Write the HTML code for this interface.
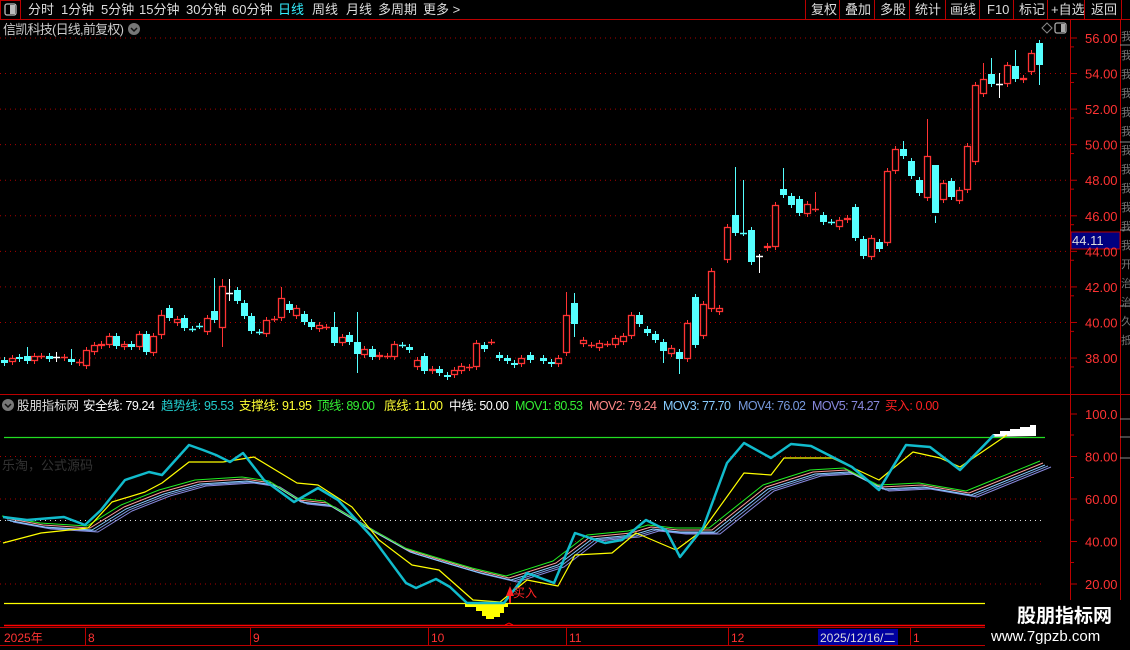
<!DOCTYPE html>
<html><head><meta charset="utf-8">
<style>
html,body{margin:0;padding:0;background:#000;width:1130px;height:650px;overflow:hidden;font-family:"Liberation Sans","Noto Sans CJK SC",sans-serif}
svg{position:absolute;left:0;top:0}
</style></head><body>
<svg id="s" width="1130" height="650" xmlns="http://www.w3.org/2000/svg" font-family="Liberation Sans, Noto Sans CJK SC, sans-serif">
<rect width="1130" height="650" fill="#000"/>
<line x1="0" y1="19.5" x2="1130" y2="19.5" stroke="#b00" />
<rect x="0.5" y="0.5" width="20" height="19" fill="none" stroke="#b00"/>
<rect x="5" y="4" width="11" height="11" rx="2" fill="none" stroke="#bbb" stroke-width="1.3"/>
<rect x="10" y="5" width="5" height="9" fill="#bbb"/>
<g font-size="13" fill="#ddd">
<text x="28" y="14">分时</text><text x="61" y="14">1分钟</text><text x="101" y="14">5分钟</text><text x="139" y="14">15分钟</text><text x="186" y="14">30分钟</text><text x="232" y="14">60分钟</text>
<text x="278" y="14" fill="#3ef">日线</text><text x="312" y="14">周线</text><text x="346" y="14">月线</text><text x="378" y="14">多周期</text><text x="423" y="14">更多 &gt;</text>
</g>
<g stroke="#b00">
<line x1="805.5" y1="0" x2="805.5" y2="19"/><line x1="839.5" y1="0" x2="839.5" y2="19"/><line x1="874.5" y1="0" x2="874.5" y2="19"/><line x1="909.5" y1="0" x2="909.5" y2="19"/><line x1="945.5" y1="0" x2="945.5" y2="19"/><line x1="979.5" y1="0" x2="979.5" y2="19"/><line x1="1013.5" y1="0" x2="1013.5" y2="19"/><line x1="1047.5" y1="0" x2="1047.5" y2="19"/><line x1="1084.5" y1="0" x2="1084.5" y2="19"/><line x1="1121.5" y1="0" x2="1121.5" y2="19"/>
</g>
<g font-size="13" fill="#ddd">
<text x="811" y="14">复权</text><text x="845" y="14">叠加</text><text x="880" y="14">多股</text><text x="915" y="14">统计</text><text x="950" y="14">画线</text><text x="987" y="14">F10</text><text x="1019" y="14">标记</text><text x="1051" y="14">+自选</text><text x="1091" y="14">返回</text>
</g>
<text x="3" y="34" font-size="13" fill="#ccc" textLength="121">信凯科技(日线,前复权)</text>
<circle cx="134" cy="29" r="6" fill="#777"/><path d="M131 28l3 3 3-3" stroke="#111" stroke-width="1.5" fill="none"/>
<path d="M1042 28l5-5 5 5-5 5z" fill="none" stroke="#888"/>
<rect x="1055" y="23" width="11" height="10" rx="2" fill="none" stroke="#aaa" stroke-width="1.3"/><rect x="1061" y="24" width="4" height="8" fill="#aaa"/>
<line x1="1070.5" y1="20" x2="1070.5" y2="627" stroke="#b00"/>
<line x1="1120.5" y1="20" x2="1120.5" y2="627" stroke="#b00"/>
<line x1="0" y1="394.5" x2="1130" y2="394.5" stroke="#b00"/>
<line x1="0" y1="627.5" x2="985" y2="627.5" stroke="#b00"/>
<line x1="0" y1="645.5" x2="985" y2="645.5" stroke="#b00"/>
<g id="grid"></g>
<g id="candles"></g>
<rect x="1071" y="232" width="49" height="17" fill="#000080" stroke="#b00"/>
<text x="1072" y="245" font-size="13" fill="#ddd">44.11</text>
<circle cx="8" cy="405" r="6" fill="#777"/><path d="M5 404l3 3 3-3" stroke="#111" stroke-width="1.5" fill="none"/>
<g font-size="12.5">
<text x="17" y="410" fill="#ddd" textLength="62">股朋指标网</text>
<text x="83" y="410" fill="#fff" textLength="72">安全线: 79.24</text>
<text x="161" y="410" fill="#2cc" textLength="73">趋势线: 95.53</text>
<text x="239" y="410" fill="#ff3" textLength="73">支撑线: 91.95</text>
<text x="317" y="410" fill="#3e3" textLength="58">顶线: 89.00</text>
<text x="384" y="410" fill="#ff3" textLength="59">底线: 11.00</text>
<text x="449" y="410" fill="#fff" textLength="60">中线: 50.00</text>
<text x="515" y="410" fill="#3e3" textLength="68">MOV1: 80.53</text>
<text x="589" y="410" fill="#f88" textLength="68">MOV2: 79.24</text>
<text x="663" y="410" fill="#8cf" textLength="68">MOV3: 77.70</text>
<text x="738" y="410" fill="#79d" textLength="68">MOV4: 76.02</text>
<text x="812" y="410" fill="#88d" textLength="68">MOV5: 74.27</text>
<text x="885" y="410" fill="#f22" textLength="54">买入: 0.00</text>
</g>
<text x="2" y="470" font-size="13" fill="#333">乐淘，公式源码</text>
<line x1="4" y1="437.5" x2="1045" y2="437.5" stroke="#2d2" stroke-width="1.3"/>
<line x1="4" y1="603.5" x2="985" y2="603.5" stroke="#ff0" stroke-width="1.3"/>
<line x1="4" y1="625.5" x2="985" y2="625.5" stroke="#f00" stroke-width="1.5"/>
<path d="M505 625l4-2 4 2" stroke="#f00" fill="none"/>
<path d="M465 603h43v4h-4v6h-4v4h-6v2h-8v-3h-4v-5h-6v-4h-11z" fill="#ff0"/>
<path d="M985 437h5l3-3h7v-3h10v-2h10v-2h10v-2h6v11z" fill="#fff"/>
<g id="ind"></g>
<path d="M510 586l-4 10h3v7h2v-7h3z" fill="#f22"/>
<text x="513" y="597" font-size="12" fill="#f22">买入</text>
<g id="axl" font-size="13" fill="#f33"></g>
<g font-size="12" fill="#f33">
<text x="4" y="642">2025年</text><text x="88" y="642">8</text><text x="253" y="642">9</text><text x="431" y="642">10</text><text x="569" y="642">11</text><text x="731" y="642">12</text><text x="913" y="642">1</text>
</g>
<g stroke="#b00"><line x1="85.5" y1="628" x2="85.5" y2="645"/><line x1="250.5" y1="628" x2="250.5" y2="645"/><line x1="428.5" y1="628" x2="428.5" y2="645"/><line x1="566.5" y1="628" x2="566.5" y2="645"/><line x1="728.5" y1="628" x2="728.5" y2="645"/><line x1="910.5" y1="628" x2="910.5" y2="645"/></g>
<rect x="818" y="629" width="80" height="16" fill="#0000a0"/>
<text x="820" y="642" font-size="12" fill="#ddd">2025/12/16/二</text>
<rect x="985" y="600" width="145" height="50" fill="#000"/>
<text x="1017" y="622" font-size="19" font-weight="bold" fill="#fff">股朋指标网</text>
<text x="991" y="641" font-size="15" fill="#fff">www.7gpzb.com</text>
<g stroke="#888" stroke-width="1"><line x1="1120" y1="45" x2="1130" y2="45"/><line x1="1120" y1="142" x2="1130" y2="142"/><line x1="1120" y1="230" x2="1130" y2="230"/><line x1="1120" y1="306" x2="1130" y2="306"/><line x1="1120" y1="419" x2="1130" y2="419"/><line x1="1120" y1="437" x2="1130" y2="437"/><line x1="1120" y1="458" x2="1130" y2="458"/></g>
<g id="side" font-size="11" fill="#777"></g>
</svg>
<script>
var NS="http://www.w3.org/2000/svg";
function el(p,t,a,txt){var e=document.createElementNS(NS,t);for(var k in a)e.setAttribute(k,a[k]);if(txt!=null)e.textContent=txt;document.getElementById(p).appendChild(e);return e;}
for(var p=38;p<=56;p+=2){var y=38+(56-p)*17.78;
 el("grid","line",{x1:0,x2:1068,y1:y,y2:y,stroke:"#a00","stroke-dasharray":"1 4"});
 el("grid","line",{x1:1070,x2:1077,y1:y,y2:y,stroke:"#b00"});
 el("grid","line",{x1:1070,x2:1074,y1:y+8.9,y2:y+8.9,stroke:"#b00"});
 el("axl","text",{x:1085,y:y+5},p.toFixed(2));}
[[100,"100.0"],[80,"80.00"],[60,"60.00"],[40,"40.00"],[20,"20.00"]].forEach(function(v){var y=626.5-2.125*v[0];
 if(v[0]<100)el("grid","line",{x1:0,x2:1045,y1:y,y2:y,stroke:"#a00","stroke-dasharray":"1 4"});
 el("grid","line",{x1:1070,x2:1077,y1:y,y2:y,stroke:"#b00"});
 el("grid","line",{x1:1070,x2:1074,y1:y+21,y2:y+21,stroke:"#b00"});
 el("axl","text",{x:1085,y:y+5},v[1]);});
el("grid","line",{x1:0,x2:1045,y1:520.5,y2:520.5,stroke:"#ddd","stroke-dasharray":"1 4"});
var C=[[4,360,363,'c'],[12,358,362,'r'],[19,357,359,'c'],[27,356,361,'c',347],[34,356,361,'r'],[41,356,356,'r'],[49,356,359,'c'],[56,357,357,'w',352,362],[64,357,358,'r'],[71,359,362,'c',349],[79,362,363,'r'],[86,366,350,'r'],[94,352,345,'r'],[101,346,344,'r'],[109,345,336,'r'],[116,336,346,'c'],[124,347,344,'r'],[131,344,347,'c'],[139,347,334,'r'],[146,334,352,'c'],[153,353,336,'r'],[161,335,315,'r',310,339],[169,308,318,'c'],[177,323,319,'r'],[184,318,328,'c'],[192,329,329,'c'],[199,326,326,'c'],[207,332,318,'r'],[214,311,320,'c',278],[222,328,286,'r',279,347],[229,293,293,'w',279,301],[237,290,301,'c'],[244,303,316,'c'],[251,316,331,'c'],[259,332,332,'c'],[266,334,320,'r'],[274,319,319,'r'],[281,318,298,'r',287],[289,304,310,'c'],[296,316,308,'r'],[304,314,322,'c'],[311,322,327,'c'],[319,329,325,'r'],[326,327,327,'r'],[334,327,343,'c',312],[342,343,337,'r'],[349,335,342,'c'],[357,342,354,'c',312,373],[364,355,349,'r'],[372,349,357,'c'],[379,357,355,'r'],[387,356,356,'r'],[394,357,344,'r'],[402,345,345,'c'],[409,347,350,'c'],[417,367,360,'r'],[424,356,371,'c'],[432,371,369,'r'],[439,369,373,'c'],[447,375,377,'c'],[454,375,370,'r'],[461,371,366,'r'],[469,368,367,'r'],[476,367,343,'r'],[484,345,349,'c'],[491,342,342,'r'],[499,355,358,'c'],[507,358,361,'c'],[514,363,365,'c'],[521,364,358,'r'],[530,355,360,'c'],
[543,358,361,'c'],[551,362,364,'c'],[558,364,358,'r'],[566,353,315,'r',292],[574,303,324,'c',293,337],[583,344,340,'r'],[591,345,345,'r'],[599,348,343,'r'],[607,344,344,'r'],[615,345,338,'r'],[623,342,336,'r'],[631,336,315,'r'],[639,315,324,'c'],[647,329,333,'c'],[655,334,340,'c'],[663,342,351,'c',null,363],[671,354,348,'r'],[679,352,359,'c',null,374],[687,359,323,'r'],[695,297,345,'c'],[703,336,304,'r'],[711,309,271,'r'],[719,312,308,'r'],[727,260,227,'r'],[735,215,233,'c',167],[743,233,233,'c',180],[751,230,262,'c'],[759,256,256,'w',254,273],[767,248,246,'r'],[775,247,205,'r'],[783,189,195,'c',168],[791,196,205,'c'],[799,199,213,'c'],[807,214,204,'r'],[815,209,209,'r',192],[823,215,222,'c'],[831,222,222,'c'],[839,227,220,'r'],[847,220,218,'r'],[855,207,238,'c'],[863,239,256,'c'],[871,257,238,'r'],[879,242,249,'c'],[887,243,171,'r'],[895,171,149,'r'],[903,149,156,'c',141],[911,161,176,'c'],[919,180,193,'c'],[927,198,156,'r',119],[935,165,213,'c',223],[943,200,183,'r'],[951,181,197,'c'],[959,201,190,'r'],[967,190,146,'r'],[975,162,85,'r'],[983,94,79,'r',63],[991,74,84,'c',58],[999,84,84,'w',73,98],[1007,84,65,'r'],[1015,66,79,'c',50],[1023,80,78,'r'],[1031,72,53,'r'],[1039,43,65,'c',40,85]];
C.forEach(function(c){var x=c[0],a=c[1],b=c[2],t=c[3];var top=Math.min(a,b),bot=Math.max(a,b);
 var hi=c[4]!=null?c[4]:top-3,lo=c[5]!=null?c[5]:bot+3;
 var col=t=='r'?'#f33':(t=='c'?'#5ff':'#fff');
 el("candles","line",{x1:x+0.5,x2:x+0.5,y1:hi,y2:lo,stroke:col});
 if(bot-top<2){el("candles","line",{x1:x-3,x2:x+4,y1:top+0.5,y2:top+0.5,stroke:col,"stroke-width":1.5});}
 else if(t=='r'){el("candles","rect",{x:x-2.5,y:top+0.5,width:6,height:bot-top-1,fill:"#000",stroke:col,"stroke-width":1.3});}
 else el("candles","rect",{x:x-3,y:top,width:7,height:bot-top,fill:col});});
function pl(pts,col,w,dx,dy){el("ind","polyline",{points:pts.map(function(p){return (p[0]+dx)+","+(p[1]+dy)}).join(" "),fill:"none",stroke:col,"stroke-width":w,"stroke-linejoin":"round"});}
var M=[[3,518],[41,525],[88,528],[122,507],[160,492],[196,482],[243,479],[270,483],[297,500],[325,503],[365,527],[406,550],[439,560],[473,570],[507,578],[554,563],[588,537],[629,533],[649,527],[676,530],[710,530],[764,487],[811,472],[845,470],[879,487],[920,485],[967,493],[1041,463]];
pl(M,"#88d",1,10,4);pl(M,"#79d",1,7,3);pl(M,"#8cf",1,4,2);pl(M,"#f99",1,2,0);pl(M,"#2e2",1,-1,-2);
var Y=[[3,543],[41,533],[88,528],[112,502],[145,492],[162,483],[189,462],[223,462],[254,457],[297,483],[318,485],[352,507],[379,540],[412,565],[439,570],[473,600],[500,602],[527,580],[558,586],[575,555],[612,553],[636,533],[676,550],[703,530],[744,473],[771,475],[784,458],[832,458],[879,480],[913,452],[940,458],[960,467],[1007,435]];
pl(Y,"#ff0",1.2,0,0);
var T=[[3,517],[27,520],[64,517],[85,525],[101,510],[125,480],[149,472],[162,475],[189,445],[203,450],[216,455],[230,462],[243,453],[264,480],[294,502],[318,488],[338,500],[372,537],[406,583],[416,588],[436,579],[450,587],[467,603],[504,603],[527,573],[554,583],[575,533],[605,543],[622,540],[646,520],[666,530],[680,557],[703,528],[727,463],[744,443],[771,458],[791,444],[811,446],[852,467],[879,490],[906,445],[930,447],[960,470],[994,435]];
pl(T,"#1bc",2.5,0,0);
"我我我我我我我我我我我我开治治久抵".split("").forEach(function(ch,i){el("side","text",{x:1121,y:40+i*19},ch);});
</script>
</body></html>
